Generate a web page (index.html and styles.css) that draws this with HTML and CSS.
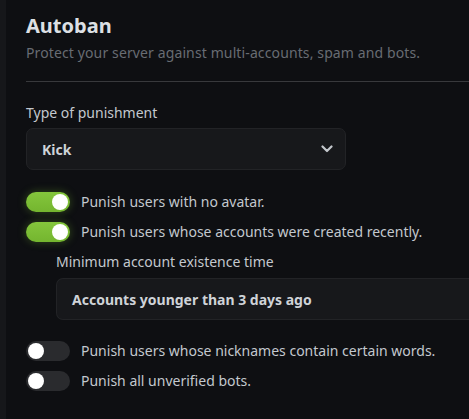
FILE: index.html
```html
<!DOCTYPE html>
<html>
<head>
<meta charset="utf-8">
<link rel="stylesheet" href="styles.css">
</head>
<body>
<div class="layout">
  <div class="sidebar"></div>
  <main class="main">
    <div class="content">
      <h1 class="title">Autoban</h1>
      <p class="subtitle">Protect your server against multi-accounts, spam and bots.</p>
      <hr class="divider">
      <div class="field">
        <div class="label">Type of punishment</div>
        <div class="select">
          <span class="select-value">Kick</span>
          <svg class="chevron" width="12" height="8" viewBox="0 0 12 8"><path d="M1.5 1.5 L6 6 L10.5 1.5" fill="none" stroke="#c3c7cc" stroke-width="2.2" stroke-linecap="round" stroke-linejoin="round"/></svg>
        </div>
      </div>
      <div class="toggles">
        <div class="toggle-row"><span class="toggle on"><span class="knob"></span></span><span class="toggle-text">Punish users with no avatar.</span></div>
        <div class="toggle-row"><span class="toggle on"><span class="knob"></span></span><span class="toggle-text">Punish users whose accounts were created recently.</span></div>
      </div>
      <div class="sub-field">
        <div class="label">Minimum account existence time</div>
        <div class="input"><span class="select-value">Accounts younger than 3 days ago</span></div>
      </div>
      <div class="toggles toggles-bottom">
        <div class="toggle-row"><span class="toggle"><span class="knob"></span></span><span class="toggle-text">Punish users whose nicknames contain certain words.</span></div>
        <div class="toggle-row"><span class="toggle"><span class="knob"></span></span><span class="toggle-text">Punish all unverified bots.</span></div>
      </div>
    </div>
  </main>
</div>
</body>
</html>
```
FILE: styles.css
```css
html, body {
  margin: 0;
  padding: 0;
  background: #0e0f12;
  overflow: hidden;
  height: 419px;
}
body {
  font-family: "Noto Sans", "Open Sans", sans-serif;
  font-size: 14px;
  line-height: 20px;
  color: #c3c8ce;
}
.layout {
  display: flex;
  min-height: 419px;
}
.sidebar {
  width: 6px;
  flex: none;
  background: #16171a;
}
.main {
  flex: 1;
  min-width: 0;
  padding: 12px 0 0 20px;
}
.content {
  width: 443px;
}
.title {
  margin: 0;
  font-size: 20px;
  line-height: 28px;
  font-weight: 700;
  color: #dde0e4;
}
.subtitle {
  margin: 3px 0 0;
  color: #686c72;
  letter-spacing: 0.12px;
}
.divider {
  margin: 18px 0 0;
  border: 0;
  height: 1px;
  background: #38393c;
}
.field {
  margin-top: 21px;
}
.label {
  color: #c3c8ce;
}
.select, .input {
  margin-top: 5px;
  height: 40px;
  border: 1px solid #222326;
  border-radius: 7px;
  background: #17181b;
  display: flex;
  align-items: center;
  padding: 0 12px 0 15px;
  box-sizing: content-box;
}
.select {
  width: 291px;
  justify-content: space-between;
}
.select-value {
  font-weight: 700;
  color: #cfd3d8;
  padding-top: 2px;
}
.chevron {
  display: block;
}
.toggles {
  margin-top: 22px;
  display: flex;
  flex-direction: column;
  gap: 10px;
}
.toggles-bottom {
  margin-top: 21px;
}
.toggle-row {
  display: flex;
  align-items: center;
  gap: 11px;
}
.toggle {
  position: relative;
  width: 44px;
  height: 20px;
  border-radius: 10px;
  background: #2a2b2e;
  flex: none;
}
.toggle.on {
  background: linear-gradient(#84c63c, #74b52f);
  box-shadow: 0 0 8px rgba(120, 190, 50, 0.35);
}
.knob {
  position: absolute;
  top: 2px;
  left: 2px;
  width: 16px;
  height: 16px;
  border-radius: 50%;
  background: #ffffff;
}
.toggle.on .knob {
  left: 26px;
}
.sub-field {
  margin: 10px 0 0 30px;
}
.input {
  margin-top: 6px;
  border-right: 0;
  border-radius: 7px 0 0 7px;
  padding-right: 0;
}
```
